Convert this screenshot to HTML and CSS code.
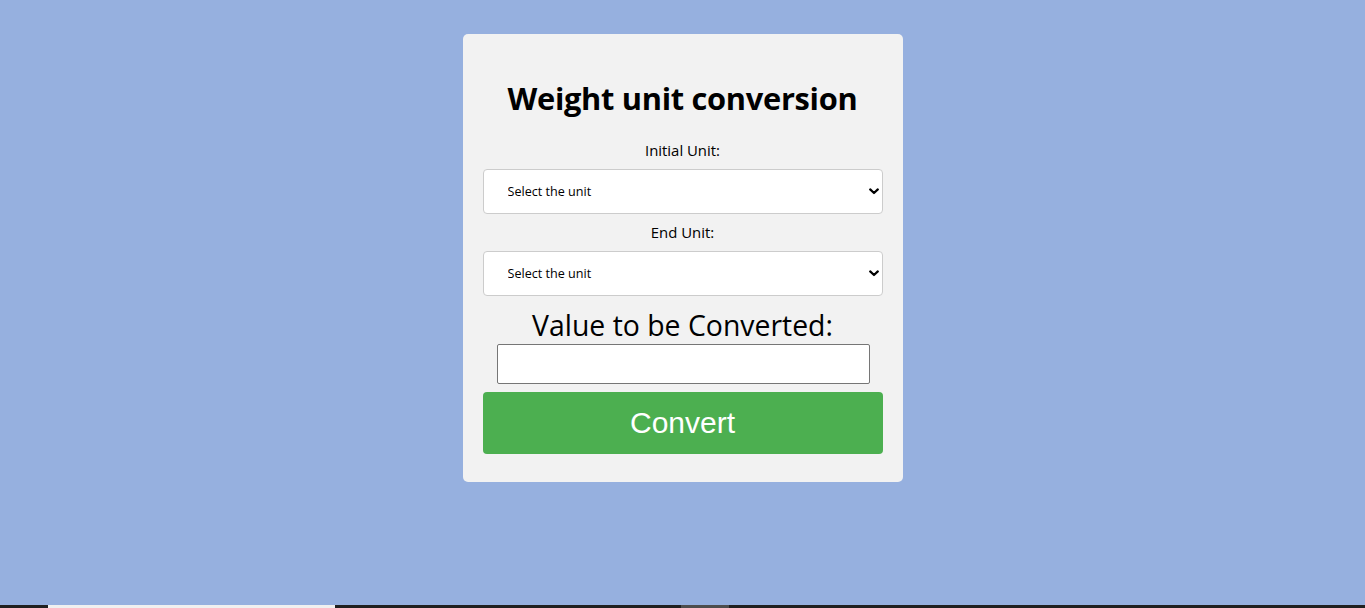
FILE: index.html
```html
<!DOCTYPE html>
<html lang="en">
<head>
<meta charset="utf-8">
<title>Weight unit conversion</title>
<link rel="stylesheet" href="styles.css">
</head>
<body>
<main class="page">
  <form class="card">
    <h1 class="title">Weight unit conversion</h1>
    <label class="label" for="from">Initial Unit:</label>
    <select class="select" id="from">
      <option>Select the unit</option>
    </select>
    <label class="label" for="to">End Unit:</label>
    <select class="select" id="to">
      <option>Select the unit</option>
    </select>
    <label class="value-label" for="val">Value to be Converted:</label>
    <input class="value-input" id="val" type="text">
    <button class="convert" type="button">Convert</button>
  </form>
</main>
<footer class="taskbar">
  <div class="tb-window"></div>
  <div class="tb-item"></div>
</footer>
</body>
</html>
```

FILE: styles.css
```css
html, body {
  margin: 0;
  padding: 0;
  height: 100%;
}
body {
  background: #96b0df;
  font-family: "Open Sans", "Noto Sans", sans-serif;
  color: #000;
  display: flex;
  flex-direction: column;
  overflow: hidden;
}
.page {
  flex: 1;
  display: flex;
  justify-content: center;
  align-items: flex-start;
  padding-top: 34px;
}
.card {
  width: 400px;
  background: #f2f2f2;
  border-radius: 5px;
  padding: 20px 20px 28px;
  display: flex;
  flex-direction: column;
  align-items: center;
}
.title {
  margin: 26px 0 24px;
  font-size: 30.8px;
  font-weight: 700;
  line-height: 36px;
  letter-spacing: -0.3px;
}
.label {
  font-size: 14.9px;
  line-height: 20px;
  margin-bottom: 9px;
}
.select {
  width: 400px;
  height: 45px;
  box-sizing: border-box;
  appearance: none;
  -webkit-appearance: none;
  background: #fff url("data:image/svg+xml;utf8,<svg xmlns='http://www.w3.org/2000/svg' width='10' height='7' viewBox='0 0 10 7'><path d='M1.2 1.4 L5 5 L8.8 1.4' fill='none' stroke='black' stroke-width='2.2' stroke-linecap='round' stroke-linejoin='round'/></svg>") no-repeat right 3px center;
  border: 1px solid #cccccc;
  border-radius: 4px;
  padding: 0 0 0 24px;
  font-family: "Open Sans", "Noto Sans", sans-serif;
  font-size: 12.6px;
  color: #000;
  margin-bottom: 8px;
}
.value-label {
  font-size: 28.4px;
  line-height: 34px;
  margin-top: 4px;
  margin-bottom: 2px;
}
.value-input {
  width: 373px;
  height: 40px;
  box-sizing: border-box;
  border: 1px solid #767676;
  border-radius: 2px;
  background: #fff;
  margin: 0 0 8px 1px;
}
.convert {
  width: 400px;
  height: 62px;
  background: #4caf50;
  color: #fff;
  border: none;
  border-radius: 4px;
  font-family: "Liberation Sans", Arial, sans-serif;
  font-size: 30px;
}
.taskbar {
  height: 3px;
  background: #202020;
  display: flex;
  align-items: stretch;
  flex-shrink: 0;
}
.tb-window {
  margin-left: 48px;
  width: 287px;
  background: #f0f0f0;
}
.tb-item {
  margin-left: 346px;
  width: 48px;
  background: #4d4d4d;
}
```
